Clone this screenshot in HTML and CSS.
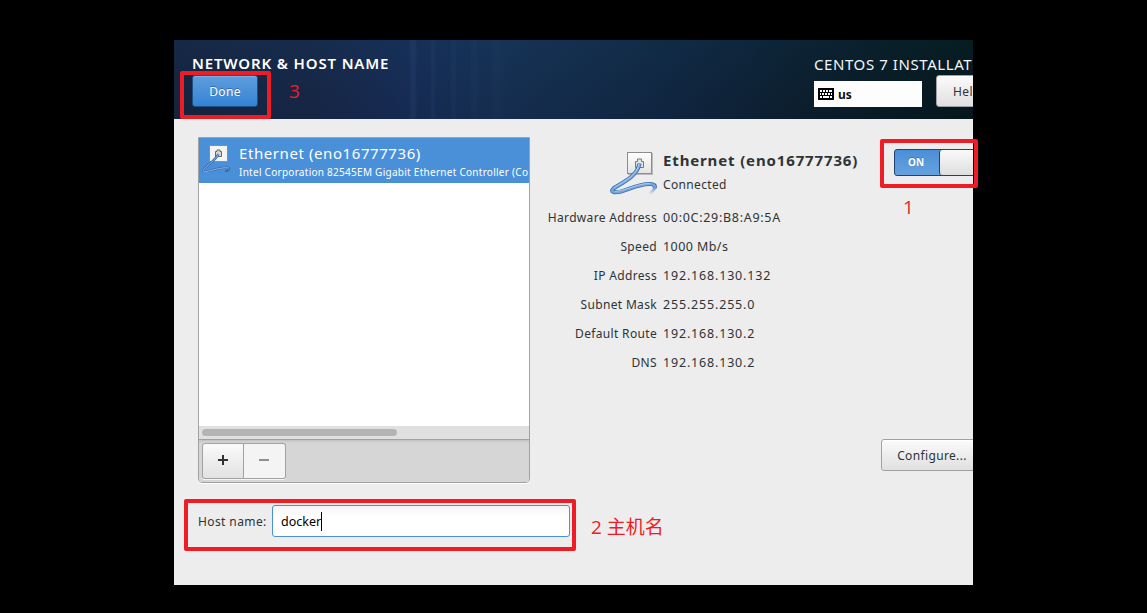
FILE: index.html
```
<!DOCTYPE html>
<html lang="en">
<head>
<meta charset="utf-8">
<title>Network &amp; Host Name</title>
<link rel="stylesheet" href="styles.css">
</head>
<body>
<main class="installer">
  <header class="header">
    <div class="header-left">
      <h1 class="title"><span class="t-title">NETWORK &amp; HOST NAME</span></h1>
      <button class="btn done"><span class="t-done">Done</span></button>
    </div>
    <div class="header-right">
      <div class="product"><span class="t-product">CENTOS 7 INSTALLAT</span></div>
      <div class="header-tools">
        <div class="keyboard">
          <svg width="16" height="12" viewBox="0 0 16 12" shape-rendering="crispEdges"><rect width="16" height="12" rx="1" fill="#000"/><path d="M2 3h2M5 3h2M8 3h2M11 3h3M2 6h1M4 6h2M7 6h2M10 6h2M13 6h1M2 9h2M5 9h6M12 9h2" stroke="#fff" stroke-width="2"/></svg>
          <span class="t-us">us</span>
        </div>
        <button class="btn help"><span class="t-help">Hel</span></button>
      </div>
    </div>
  </header>
  <div class="content">
    <div class="columns">
      <section class="devices">
        <div class="device-row">
          <svg class="device-icon" width="32" height="32" viewBox="0 0 32 32">
            <rect x="7.500" y="5.500" width="18" height="16" fill="#f4f4f2" stroke="#8b8d88"/>
            <path d="M13.500 16.500v-5h1.500v-1.500h3v1.500h1.500v5z" fill="#d8d8d4" stroke="#666"/>
            <path d="M16.500 14C14 20 5 25 1.500 30 0 33 7 31 13 29.500S26 27 27 28.500c0 1.500-2 2.500-4 3" fill="none" stroke="#3a6db2" stroke-width="2.400"/>
            <path d="M16.500 14C14 20 5 25 1.500 30 0 33 7 31 13 29.500S26 27 27 28.500" fill="none" stroke="#8db4e3" stroke-width="1"/>
          </svg>
          <div class="device-text">
            <div class="device-name"><span class="t-dev">Ethernet (eno16777736)</span></div>
            <div class="device-desc"><span class="t-desc">Intel Corporation 82545EM Gigabit Ethernet Controller (Co</span></div>
          </div>
        </div>
        <div class="list-space"></div>
        <div class="scrollbar"><div class="thumb"></div></div>
        <div class="toolbar">
          <button class="tool add"><svg width="12" height="12" viewBox="0 0 12 12"><path d="M1 6h10M6 1v10" stroke="#2e3436" stroke-width="2"/></svg></button>
          <button class="tool remove"><svg width="12" height="12" viewBox="0 0 12 12"><path d="M1 6h10" stroke="#8b9192" stroke-width="2"/></svg></button>
        </div>
      </section>
      <section class="details">
        <div class="detail-head">
          <svg class="detail-icon" width="48" height="48" viewBox="0 0 48 48">
            <defs>
              <linearGradient id="plate" x1="0" y1="0" x2="0" y2="1"><stop offset="0" stop-color="#fff"/><stop offset="1" stop-color="#e3e3e1"/></linearGradient>
              <linearGradient id="fade" gradientUnits="userSpaceOnUse" x1="0" y1="38" x2="0" y2="47"><stop offset="0" stop-color="#3b6fb3"/><stop offset="1" stop-color="#8fb3e0" stop-opacity="0"/></linearGradient>
            </defs>
            <rect x="18" y="5" width="25" height="22" fill="#bbb"/>
            <rect x="17.500" y="4.500" width="24" height="21" fill="url(#plate)" stroke="#8b8d88"/>
            <path d="M25.500 19.500v-6h2v-2.500h4v2.500h2v6z" fill="#e5e5e2" stroke="#777"/>
            <path d="M44.500 38c.5 3-2 6-5 8" fill="none" stroke="url(#fade)" stroke-width="3"/>
            <path d="M29.500 15.500C27.500 27 16 33 4 40c-4.500 4 0 5 7 3.500C20 41 30 35.500 40 36c4 .3 5.500 1.500 4.500 4" fill="none" stroke="#3b6fb3" stroke-width="4.200"/>
            <path d="M29.500 15.500C27.500 27 16 33 4 40c-4.500 4 0 5 7 3.500C20 41 30 35.500 40 36c4 .3 5.500 1.500 4.500 4" fill="none" stroke="#79a5dc" stroke-width="2.500"/>
            <path d="M29 16C27 27 15.500 32.500 4 39.700M5 43.500C20 41 30 35 40 35.600" fill="none" stroke="#bcd5f2" stroke-width=".8"/>
          </svg>
          <div class="detail-title">
            <div class="detail-name"><span class="t-name">Ethernet (eno16777736)</span></div>
            <div class="detail-status"><span class="t-conn">Connected</span></div>
          </div>
          <div class="switch"><div class="on"><span class="t-on">ON</span></div><div class="knob"></div></div>
        </div>
        <dl class="props">
          <dt>Hardware Address</dt><dd class="mac">00:0C:29:B8:A9:5A</dd>
          <dt>Speed</dt><dd class="speed">1000 Mb/s</dd>
          <dt>IP Address</dt><dd>192.168.130.132</dd>
          <dt>Subnet Mask</dt><dd>255.255.255.0</dd>
          <dt>Default Route</dt><dd>192.168.130.2</dd>
          <dt>DNS</dt><dd>192.168.130.2</dd>
        </dl>
        <button class="btn configure"><span class="t-conf">Configure...</span></button>
      </section>
    </div>
    <div class="host">
      <label class="host-label">Host name:</label>
      <div class="host-input"><span class="t-docker">docker</span><i class="caret"></i></div>
    </div>
  </div>
</main>
<div class="mark mark-done"></div>
<div class="mark mark-switch"></div>
<div class="mark mark-host"></div>
<div class="note note-3">3</div>
<div class="note note-1">1</div>
<div class="note note-2">2 主机名</div>
</body>
</html>
```
FILE: styles.css
```
* { box-sizing: border-box; }
body { margin: 0; width: 1147px; height: 613px; overflow: hidden; background: #000; padding: 40px 174px 28px; font-family: "Noto Sans", "Open Sans", sans-serif; font-size: 12px; line-height: 18px; color: #2e3436; position: relative; }
span { white-space: nowrap; }
button { font: inherit; color: inherit; padding: 0; margin: 0; }
.installer { width: 799px; height: 545px; background: #ededed; overflow: hidden; }
.header { height: 79px; display: flex; justify-content: space-between; background:
  linear-gradient(180deg, rgba(30,80,120,.1), rgba(20,20,50,.1)),
  linear-gradient(90deg, transparent 235px, rgba(80,120,180,.1) 237px 241px, transparent 243px 256px, rgba(80,120,180,.08) 258px 260px, transparent 262px 276px, rgba(70,110,170,.07) 278px 281px, transparent 283px 296px, rgba(60,110,160,.06) 298px 302px, transparent 306px 316px, rgba(60,110,160,.05) 320px 324px, transparent 332px),
  linear-gradient(90deg, #15243f 0, #162746 140px, #162c55 230px, #152f51 330px, #122a47 430px, #0e243b 530px, #0a1e2c 630px, #061a20 720px, #041719 799px); }
.header-left { padding: 13px 0 0 18px; }
.title { margin: 0; font-size: 15px; line-height: 20px; height: 22px; font-weight: 600; color: #fff; }
.t-title { letter-spacing: .85px; }
.btn { height: 32px; padding-top: 1px; border: 1px solid #a1a1a1; border-radius: 3px; background: linear-gradient(#fbfbfb, #e0e0e0); box-shadow: inset 0 1px #fff; display: flex; align-items: center; justify-content: center; flex: none; }
.done { width: 66px; color: #fff; border-color: #1c5187; background: linear-gradient(#5f9ddd, #3583d5); box-shadow: inset 0 1px #76aee6; text-shadow: 0 -1px rgba(0,0,0,.3); }
.header-right { width: 159px; padding-top: 14px; }
.product { color: #f4f6f7; font-size: 15px; line-height: 20px; height: 21px; }
.t-product { letter-spacing: .58px; }
.header-tools { display: flex; align-items: flex-start; width: 190px; }
.keyboard { margin: 6px 14px 0 0; width: 108px; height: 26px; padding-left: 4px; background: #fdfdfd; display: flex; align-items: center; gap: 4px; font-weight: 700; font-size: 12px; color: #111; flex: none; }
.t-us { padding-top: 2px; }
.help { width: 70px; justify-content: flex-start; padding-left: 16px; }
.t-help { letter-spacing: .4px; }
.content { padding: 18px 0 0 24px; }
.columns { display: flex; }
.devices { width: 332px; height: 346px; border: 1px solid #a1a1a1; border-radius: 0 0 4px 4px; background: #fff; display: flex; flex-direction: column; overflow: hidden; box-shadow: 0 1px #fff; }
.device-row { height: 45px; background: #4a90d9; color: #fff; display: flex; gap: 5px; padding-left: 3px; flex: none; }
.device-icon { margin-top: 2px; flex: none; }
.device-name { font-size: 15px; line-height: 20px; padding-top: 5px; }
.t-dev { letter-spacing: .58px; }
.device-desc { font-size: 10px; line-height: 19px; }
.t-desc { letter-spacing: .27px; }
.list-space { flex: 1; }
.scrollbar { height: 13px; padding: 3px; background: #e0e0e0; }
.thumb { width: 195px; height: 7px; border-radius: 4px; background: #b2b4b5; }
.toolbar { height: 43px; border-top: 1px solid #a1a1a1; background: #d6d6d6; box-shadow: inset 0 3px 3px -2px #bbb; padding: 3px; display: flex; }
.tool { height: 36px; padding-bottom: 2px; border: 1px solid #a1a1a1; background: linear-gradient(#fafafa, #e2e2e2); display: flex; align-items: center; justify-content: center; box-shadow: 0 1px #f5f5f5; }
.add { width: 42px; border-radius: 3px 0 0 3px; }
.remove { width: 42px; padding-right: 1px; border-left: 0; border-radius: 0 3px 3px 0; background: #f4f4f4; }
.details { width: 443px; height: 346px; flex: none; display: flex; flex-direction: column; }
.detail-head { display: flex; padding-left: 80px; height: 66px; flex: none; }
.detail-icon { margin-top: 11px; flex: none; }
.detail-title { width: 236px; padding: 13px 0 0 5px; flex: none; }
.detail-name { font-size: 15px; line-height: 20px; font-weight: 700; }
.t-name { letter-spacing: .86px; }
.detail-status { line-height: 18px; padding-top: 6px; }
.switch { margin-top: 12px; width: 92px; height: 27px; display: flex; flex: none; border: 1px solid #1c4372; border-radius: 3px; background: linear-gradient(#4a8fd8, #67a1de); }
.on { width: 44px; padding-right: 2px; color: #fff; font-weight: 700; font-size: 10px; line-height: 25px; text-align: center; text-shadow: 0 -1px rgba(0,0,0,.25); }
.knob { width: 46px; border-left: 1px solid #1c4372; border-radius: 3px; background: linear-gradient(#fafafa, #dedede); }
.props { margin: 0; display: grid; grid-template-columns: 127px 1fr; column-gap: 6px; grid-auto-rows: 29px; line-height: 29px; }
.props dt { text-align: right; letter-spacing: .33px; }
.props dd { margin: 0; font-size: 12.5px; letter-spacing: .82px; }
.props .mac { letter-spacing: .7px; }
.props .speed { letter-spacing: .42px; }
.configure { margin: auto 0 12px 351px; width: 102px; }
.host { display: flex; align-items: center; margin-top: 22px; }
.host-label { width: 74px; padding-top: 2px; letter-spacing: .4px; }
.host-input { width: 298px; height: 32px; border: 1px solid #4a90d9; border-radius: 3px; background: linear-gradient(#f4f4f4, #fff 35%); padding-left: 8px; display: flex; align-items: center; color: #000; font-size: 12.5px; }
.t-docker { padding-top: 2px; }
.caret { width: 1px; height: 19px; background: #000; }
.mark { position: absolute; border: 4px solid #ee1c25; border-radius: 2px; }
.mark-done { left: 180px; top: 71px; width: 91px; height: 48px; }
.mark-switch { left: 880px; top: 139px; width: 98px; height: 49px; }
.mark-host { left: 184px; top: 499px; width: 392px; height: 52px; }
.note { position: absolute; color: #ee1c25; font: 19px/24px "Open Sans", "Noto Sans CJK SC", sans-serif; white-space: nowrap; }
.note-3 { left: 289px; top: 79px; }
.note-1 { left: 903px; top: 195px; }
.note-2 { left: 591px; top: 515px; }
.t-done, .t-conf, .t-conn { letter-spacing: .35px; }
```
